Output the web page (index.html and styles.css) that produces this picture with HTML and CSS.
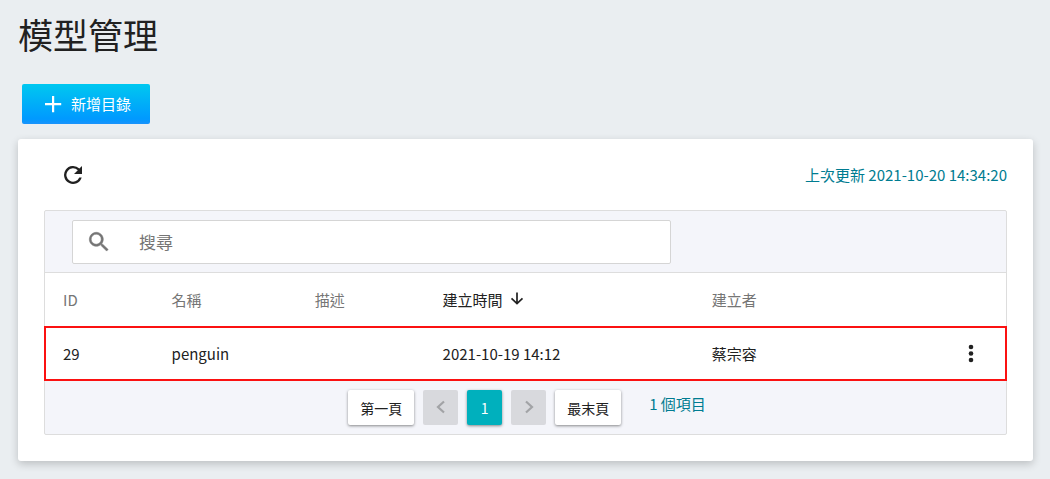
FILE: index.html
```html
<!DOCTYPE html>
<html lang="zh-Hant">
<head>
<meta charset="utf-8">
<meta name="viewport" content="width=device-width, initial-scale=1">
<title>模型管理</title>
<link rel="stylesheet" href="styles.css">
</head>
<body>
<main class="page">
  <h1 class="page-title">模型管理</h1>
  <button class="add-button" type="button">
    <svg class="icon" viewBox="0 0 24 24" aria-hidden="true"><path d="M11 4h2.200v7h7v2.200h-7v7H11v-7H4V11h7z"/></svg>
    <span>新增目錄</span>
  </button>
  <section class="card">
    <div class="toolbar">
      <button class="icon-button" type="button" aria-label="重新整理">
        <svg class="icon" viewBox="0 0 24 24" aria-hidden="true"><path d="M18.400 5.600A9 9 0 1 0 20.700 14.500H18.300A6.700 6.700 0 1 1 16.800 7.200L13 11H21V3z"/></svg>
      </button>
      <span class="updated">上次更新 2021-10-20 14:34:20</span>
    </div>
    <div class="panel">
      <div class="search-bar">
        <label class="search-box">
          <svg class="icon search-icon" viewBox="0 0 24 24" aria-hidden="true"><path fill-rule="evenodd" d="M15.700 14.200h-.8l-.3-.3A7 7 0 1 0 13.900 14.600l.3.300v.8l5.400 5.400 1.600-1.600zM9.200 14.200a5 5 0 1 1 0-10 5 5 0 0 1 0 10z"/></svg>
          <input class="search-input" type="text" placeholder="搜尋" aria-label="搜尋">
        </label>
      </div>
      <table class="data-table">
        <colgroup>
          <col class="col-id"><col class="col-name"><col class="col-desc"><col class="col-time"><col class="col-owner"><col class="col-menu">
        </colgroup>
        <thead>
          <tr>
            <th scope="col">ID</th>
            <th scope="col">名稱</th>
            <th scope="col">描述</th>
            <th scope="col" class="sorted" aria-sort="descending"><span class="sort-label">建立時間<svg class="sort-icon" viewBox="0 0 16 16" aria-hidden="true"><path d="M8 .5v11M2.500 6.300L8 11.500l5.500-5.200"/></svg></span></th>
            <th scope="col">建立者</th>
            <td></td>
          </tr>
        </thead>
        <tbody>
          <tr class="selected">
            <td>29</td>
            <td>penguin</td>
            <td></td>
            <td>2021-10-19 14:12</td>
            <td>蔡宗容</td>
            <td class="menu-cell">
              <button class="icon-button" type="button" aria-label="更多">
                <svg class="icon" viewBox="0 0 24 24" aria-hidden="true"><circle cx="12" cy="5" r="2.300"/><circle cx="12" cy="11.500" r="2.300"/><circle cx="12" cy="18" r="2.300"/></svg>
              </button>
            </td>
          </tr>
        </tbody>
      </table>
      <div class="pager">
        <nav class="pages" aria-label="分頁">
          <button class="page-button" type="button">第一頁</button>
          <button class="page-button square" type="button" aria-label="上一頁" disabled><svg class="chevron" viewBox="0 0 16 16" aria-hidden="true"><path d="M11 1.500L5 7l6 5.500"/></svg></button>
          <button class="page-button square current" type="button" aria-current="page">1</button>
          <button class="page-button square" type="button" aria-label="下一頁" disabled><svg class="chevron" viewBox="0 0 16 16" aria-hidden="true"><path d="M5 1.500L11 7l-6 5.500"/></svg></button>
          <button class="page-button" type="button">最末頁</button>
        </nav>
        <span class="total">1 個項目</span>
      </div>
    </div>
  </section>
</main>
</body>
</html>
```

FILE: styles.css
```css
* {
  box-sizing: border-box;
}

body {
  margin: 0;
  background: #eaeef1;
  color: #212121;
  font-family: "Noto Sans CJK TC", sans-serif;
  font-size: 15px;
  line-height: 24px;
}

button,
input {
  font: inherit;
  color: inherit;
}

button {
  border: 0;
  padding: 0;
  background: none;
}

.page {
  padding: 6px 17px 18px 18px;
}

.page-title {
  margin: 0;
  font-size: 35px;
  font-weight: 400;
  line-height: 56px;
}

.icon {
  display: block;
  width: 24px;
  height: 24px;
  fill: currentColor;
}

.add-button {
  display: flex;
  align-items: center;
  gap: 6px;
  height: 40px;
  margin: 22px 4px 15px;
  padding: 0 19px;
  border-radius: 2px;
  background: linear-gradient(#00c8f0, #0099ff 88%, #1b93fb);
  color: #fff;
}

.card {
  padding: 0 26px 26px;
  border-radius: 3px;
  background: #fff;
  box-shadow: 0 3px 8px rgba(0, 0, 0, 0.2);
}

.toolbar {
  display: flex;
  align-items: center;
  justify-content: space-between;
  height: 71px;
  padding-left: 17px;
}

.updated,
.total {
  color: #007c91;
}

.panel {
  border: 1px solid #dddddd;
  border-radius: 2px;
  background: #f4f5fa;
}

.search-bar {
  padding: 9px 27px 8px;
  border-bottom: 1px solid #dddddd;
}

.search-box {
  display: flex;
  align-items: center;
  width: 66%;
  height: 44px;
  padding-left: 14px;
  border: 1px solid #d5d5d5;
  border-radius: 2px;
  background: #fff;
}

.search-icon {
  flex: none;
  color: #757575;
  stroke: currentColor;
  stroke-width: 0.5;
}

.search-input {
  flex: 1;
  min-width: 0;
  margin-left: 28px;
  padding: 0;
  border: 0;
  outline: 0;
  background: none;
  font-size: 17px;
}

.search-input::placeholder {
  color: #757575;
}

.data-table {
  width: 100%;
  border-collapse: collapse;
  table-layout: fixed;
  background: #fff;
}

.col-id { width: 11.3%; }
.col-name { width: 14.9%; }
.col-desc { width: 13.3%; }
.col-time { width: 28%; }

.data-table th,
.data-table td {
  height: 54px;
  padding: 0 0 0 18px;
  text-align: left;
  font-weight: 400;
}

.data-table .selected td {
  height: 53px;
}

.data-table th {
  color: #757575;
}

.data-table th.sorted {
  color: #212121;
}

.sort-label {
  display: flex;
  align-items: center;
  gap: 6px;
}

.sort-icon {
  width: 16px;
  height: 16px;
  fill: none;
  stroke: currentColor;
  stroke-width: 1.7;
}

.selected {
  outline: 2px solid #fb1111;
  outline-offset: -1px;
}

.data-table .menu-cell {
  padding-right: 23px;
}

.menu-cell .icon-button {
  display: block;
  margin-left: auto;
}

.pager {
  display: flex;
  justify-content: center;
  gap: 28px;
  padding: 10px 0 9px 3px;
}

.pages {
  display: flex;
  gap: 9px;
}

.page-button {
  height: 35px;
  padding: 0 12px;
  border-radius: 2px;
  background: #fff;
  box-shadow: 0 1px 3px rgba(0, 0, 0, 0.45);
  font-size: 14px;
}

.page-button.square {
  display: grid;
  place-items: center;
  width: 35px;
  padding: 0;
}

.page-button.current {
  background: #00b0bd;
  color: #fff;
}

.page-button:disabled {
  background: #d8d9dd;
  box-shadow: none;
  color: #a2a3a6;
}

.chevron {
  width: 16px;
  height: 16px;
  fill: none;
  stroke: currentColor;
  stroke-width: 2.2;
}

.total {
  padding-top: 2px;
}
```
